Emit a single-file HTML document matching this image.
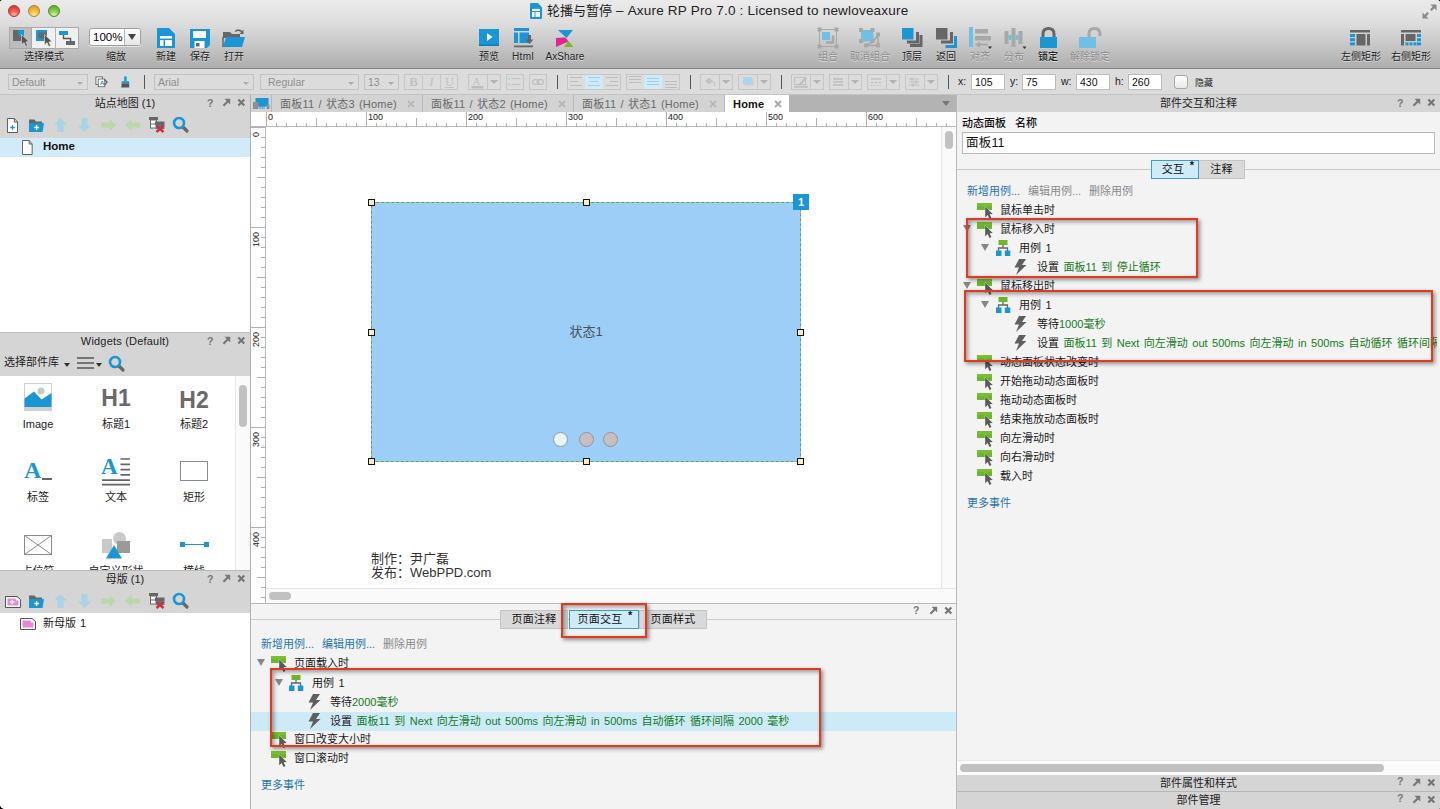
<!DOCTYPE html>
<html lang="zh-CN">
<head>
<meta charset="utf-8">
<title>轮播与暂停 – Axure RP Pro 7.0</title>
<style>
*{box-sizing:border-box;margin:0;padding:0}
html,body{width:1440px;height:809px;overflow:hidden;background:#000}
body{font-family:"Liberation Sans","Noto Sans CJK SC",sans-serif;font-size:11px;color:#1a1a1a;position:relative}
.abs{position:absolute}
#win{position:absolute;left:0;top:0;width:1440px;height:809px;background:#d8d8d8;border-radius:3px 3px 2px 5px;overflow:hidden}
/* ---------- title + toolbar ---------- */
#top{position:absolute;left:0;top:0;width:1440px;height:69px;background:linear-gradient(#ebebeb 0px,#dedede 22px,#c6c6c6 46px,#adadad 68px);border-bottom:1px solid #868686}
#title{position:absolute;left:546px;top:0px;line-height:21px;font-size:13.5px;color:#222;white-space:nowrap;letter-spacing:.2px}
.tl{position:absolute;top:5px;width:12px;height:12px;border-radius:50%}
.tbl{position:absolute;top:50px;font-size:10px;line-height:14px;color:#222;white-space:nowrap;transform:translateX(-50%);text-shadow:0 1px 0 rgba(255,255,255,.5)}
.tbl.dis{color:#8d8d8d}
/* ---------- format bar ---------- */
#fmt{position:absolute;left:0;top:69px;width:1440px;height:26px;background:#dcdcdc;border-bottom:1px solid #c4c4c4}
.dd{position:absolute;top:5px;height:16px;border:1px solid #c2c2c2;background:#dcdcdc;color:#8e8e8e;font-size:10.5px;line-height:14px;padding-left:3px}
.dd:after{content:"";position:absolute;right:4px;top:7px;border:3.5px solid transparent;border-top:3.5px solid #ababab;border-bottom:0}
.fb{position:absolute;top:5px;height:16px;border:1px solid #c6c6c6;background:#dcdcdc}
.fsep{position:absolute;top:6px;width:1px;height:14px;background:#555}
.num{position:absolute;top:5px;height:16px;width:34px;background:#fff;border:1px solid #bdbdbd;font-size:10.5px;line-height:14px;padding-left:3px;color:#111}
.nl{position:absolute;top:6px;font-size:10.5px;color:#222}
/* ---------- panels ---------- */
.ph{position:absolute;height:18px;background:#d5d5d5;font-size:11px;line-height:18px;text-align:center;color:#222;border-top:1px solid #bcbcbc}
.pi{position:absolute;top:0;font-size:10px;font-weight:bold;color:#666}
.white{position:absolute;background:#fff}
.wl{position:absolute;transform:translateX(-50%);font-size:11px;line-height:14px;color:#222;white-space:nowrap}
.tab{letter-spacing:.2px;word-spacing:1px;position:absolute;top:95px;height:17px;background:#d3d3d3;border-right:1px solid #b9b9b9;font-size:11px;line-height:18px;color:#6a6a6a;white-space:nowrap;overflow:hidden}
.tab.act{background:#fff;color:#111;font-weight:bold;height:17px;border-right:0}
.rl{position:absolute;top:112px;font-size:9px;line-height:11px;color:#222}
.rv{position:absolute;left:250px;margin-top:2px;width:12px;font-size:9px;line-height:12px;color:#222;writing-mode:vertical-rl;transform:rotate(180deg);text-align:right;white-space:nowrap}
.ptab{position:absolute;height:19px;letter-spacing:.3px;background:#d9d9d9;border:1px solid #c4c4c4;font-size:11px;line-height:16px;text-align:center;color:#111;white-space:nowrap}
.ptab.sel{background:#cfebf8;border:1px solid #3d9dd1}
.red{position:absolute;border:2px solid #e23a1c;box-shadow:2px 2px 4px rgba(0,0,0,.42),inset 2px 2px 4px rgba(0,0,0,.38)}
.lnk{margin-top:1px;position:absolute;font-size:11px;line-height:14px;color:#2673b3;white-space:nowrap}
.lnk.off{color:#8a8a8a}
.ev{margin-top:1px;word-spacing:1.4px;position:absolute;font-size:11px;line-height:14px;color:#1a1a1a;white-space:nowrap}
.g{color:#137a1c}
</style>
</head>
<body>
<div id="win">

<!-- ================= TITLE + TOOLBAR ================= -->
<div id="top">
  <div class="tl" style="left:8px;background:radial-gradient(circle at 50% 90%,#ffb3aa 0%,#f0645a 40%,#dc4238 75%,#c5342b 100%);border:1px solid #a83a32"></div>
  <div class="tl" style="left:28px;background:radial-gradient(circle at 50% 90%,#ffe9a0 0%,#f5c04a 40%,#e6a52c 75%,#d39520 100%);border:1px solid #a9842c"></div>
  <div class="tl" style="left:48px;background:radial-gradient(circle at 50% 90%,#d6f5a8 0%,#8fd054 40%,#69b536 75%,#55a028 100%);border:1px solid #4f8a2c"></div>

  <!-- doc icon in title -->
  <svg class="abs" style="left:530px;top:3px" width="12" height="16" viewBox="0 0 12 15" preserveAspectRatio="none"><path d="M0 1.2Q0 0 1.2 0H8L12 4V13.8Q12 15 10.8 15H1.2Q0 15 0 13.8Z" fill="#1a96d4"/><rect x="2" y="5.5" width="8" height="2" fill="#fff"/><rect x="2" y="8.5" width="2.5" height="4.5" fill="#fff"/><rect x="5.5" y="8.5" width="4.5" height="4.5" fill="#fff"/></svg>
  <!-- fullscreen -->
  <svg class="abs" style="left:1422px;top:4px" width="15" height="15" viewBox="0 0 15 15"><path d="M8.5 0.5H14.5V6.5L12.3 4.3L9.6 7L8 5.4L10.7 2.7Z" fill="#8a8a8a"/><path d="M6.5 14.5H0.5V8.5L2.7 10.7L5.4 8L7 9.6L4.3 12.3Z" fill="#8a8a8a"/></svg>

  <!-- selection mode group -->
  <div class="abs" style="left:9px;top:27px;width:70px;height:22px;border:1px solid #a9a9a9;background:#f0f0f0"></div>
  <div class="abs" style="left:10px;top:28px;width:22px;height:20px;background:#bcbcbc;border-right:1px solid #a9a9a9"></div>
  <div class="abs" style="left:55px;top:28px;width:1px;height:20px;background:#b4b4b4"></div>
  <svg class="abs" style="left:12px;top:29px" width="19" height="18" viewBox="0 0 19 18"><rect x="1" y="1" width="11" height="11" fill="#666"/><rect x="6.5" y="1" width="5.5" height="6" fill="#1a96d4"/><path d="M9.5 5.5V16L12 13.6L13.8 17.5L15.6 16.7L13.9 12.9L17 12.6Z" fill="#555" stroke="#e8e8e8" stroke-width=".6"/></svg>
  <svg class="abs" style="left:35px;top:29px" width="19" height="18" viewBox="0 0 19 18"><rect x="1" y="1" width="11" height="11" fill="#1a96d4"/><rect x="3.5" y="3.5" width="8.5" height="6" fill="#666"/><path d="M9.5 5.5V16L12 13.6L13.8 17.5L15.6 16.7L13.9 12.9L17 12.6Z" fill="#555" stroke="#e8e8e8" stroke-width=".6"/></svg>
  <svg class="abs" style="left:58px;top:29px" width="19" height="18" viewBox="0 0 19 18"><rect x="1" y="2" width="9" height="4" fill="#1a96d4"/><rect x="8" y="12" width="9" height="4" fill="#666"/><path d="M5.5 6V9.5H12.5V12" fill="none" stroke="#555" stroke-width="1.4"/></svg>
  <div class="tbl" style="left:44px">选择模式</div>

  <!-- zoom combo -->
  <div class="abs" style="left:89px;top:28px;width:52px;height:18px;border:1px solid #9f9f9f;border-radius:3px;background:#fff;box-shadow:0 1px 0 rgba(255,255,255,.5)"></div>
  <div class="abs" style="left:124px;top:29px;width:1px;height:16px;background:#b8b8b8"></div>
  <div class="abs" style="left:125px;top:29px;width:15px;height:16px;background:linear-gradient(#fdfdfd,#e6e6e6);border-radius:0 2px 2px 0"></div>
  <div class="abs" style="left:93px;top:29px;font-size:11.5px;line-height:16px;color:#000">100%</div>
  <div class="abs" style="left:128px;top:34px;border:4px solid transparent;border-top:6px solid #444;border-bottom:0"></div>
  <div class="tbl" style="left:116px">缩放</div>

  <!-- new -->
  <svg class="abs" style="left:157px;top:28px" width="18" height="20" viewBox="0 0 18 20"><path d="M0 0H12L18 6V20H0Z" fill="#1a96d4"/><rect x="3" y="8" width="12" height="2.5" fill="#fff"/><rect x="3" y="12" width="3.5" height="6" fill="#fff"/><rect x="8" y="12" width="7" height="6" fill="#fff"/></svg>
  <div class="tbl" style="left:166px">新建</div>
  <!-- save -->
  <svg class="abs" style="left:190px;top:29px" width="20" height="19" viewBox="0 0 20 19"><path d="M0 0H20V16L17 19H0Z" fill="#1a96d4"/><rect x="3" y="2" width="13" height="7" fill="#fff"/><rect x="4.5" y="12" width="10" height="7" fill="#fff"/><rect x="6" y="14" width="3.5" height="3.5" fill="#666"/></svg>
  <div class="tbl" style="left:200px">保存</div>
  <!-- open -->
  <svg class="abs" style="left:222px;top:28px" width="24" height="20" viewBox="0 0 24 20"><path d="M1 4H8L10 6H18V10H1Z" fill="#666"/><path d="M1 19L4 9H23L20 19Z" fill="#1a96d4"/><path d="M1 9V19" stroke="#666" stroke-width="1.5"/><path d="M13 3.5Q17 0.5 20 4" fill="none" stroke="#666" stroke-width="1.5"/><path d="M21.5 1.5V6H17.5Z" fill="#666"/></svg>
  <div class="tbl" style="left:234px">打开</div>

  <!-- preview -->
  <svg class="abs" style="left:479px;top:29px" width="20" height="17" viewBox="0 0 20 17"><rect width="20" height="17" fill="#1a96d4"/><rect y="15.5" width="20" height="1.5" fill="#147cb0"/><path d="M8 4L13.5 8L8 12Z" fill="#fff"/></svg>
  <div class="tbl" style="left:489px">预览</div>
  <!-- html -->
  <svg class="abs" style="left:514px;top:28px" width="20" height="20" viewBox="0 0 20 20"><rect x="0" y="0" width="15" height="3" fill="#1a96d4"/><rect x="0" y="4.5" width="4" height="10.5" fill="#1a96d4"/><rect x="5.5" y="4.5" width="9.5" height="10.5" fill="#1a96d4"/><rect x="0" y="17.5" width="19" height="1.8" fill="#666"/><path d="M14 7H17V11.5H19.5L15.5 16L11.5 11.5H14Z" fill="#666"/></svg>
  <div class="tbl" style="left:523px;letter-spacing:.4px">Html</div>
  <!-- axshare -->
  <svg class="abs" style="left:555px;top:29px" width="19" height="19" viewBox="0 0 19 19"><path d="M3 1H18L11.500 9Z" fill="#1a96d4"/><path d="M1 9L10.5 8.500L13.5 12.500L1 18Z" fill="#e6258c"/><path d="M13.5 12L18.5 18H9Z" fill="#7ab829"/></svg>
  <div class="tbl" style="left:565px;letter-spacing:.1px">AxShare</div>

  <!-- group (disabled) -->
  <svg class="abs" style="left:817px;top:27px" width="22" height="22" viewBox="0 0 22 22"><rect x="2.5" y="2.5" width="17" height="17" fill="none" stroke="#a8a8a8" stroke-width="1"/><rect x="0.5" y="0.5" width="4" height="4" fill="#a8a8a8"/><rect x="17.5" y="0.5" width="4" height="4" fill="#a8a8a8"/><rect x="0.5" y="17.5" width="4" height="4" fill="#a8a8a8"/><rect x="17.5" y="17.5" width="4" height="4" fill="#a8a8a8"/><path d="M9 15.5H16V8.5" fill="none" stroke="#a8a8a8" stroke-width="2.5"/><rect x="5" y="5" width="8" height="8" fill="#6fc0e4"/></svg>
  <div class="tbl dis" style="left:828px">组合</div>
  <!-- ungroup (disabled) -->
  <svg class="abs" style="left:858px;top:27px" width="24" height="22" viewBox="0 0 24 22"><path d="M8 18.5H20V7.5M15.5 14.5L20 7.5M15.5 14.5L8 18.5" fill="none" stroke="#a8a8a8" stroke-width="1.6"/><rect x="3" y="3" width="12.5" height="11.5" rx="1.5" fill="#6fc0e4"/><g fill="#a8a8a8"><rect x="1" y="1" width="4" height="4"/><rect x="12.5" y="1" width="4" height="4"/><rect x="1" y="12" width="4" height="4"/><rect x="12.5" y="12" width="4" height="4"/><rect x="18" y="5.5" width="4" height="4"/><rect x="6" y="16.500" width="4" height="4"/><rect x="18" y="16.500" width="4" height="4"/></g></svg>
  <div class="tbl dis" style="left:870px">取消组合</div>
  <!-- front -->
  <svg class="abs" style="left:902px;top:28px" width="21" height="21" viewBox="0 0 21 21"><path d="M8 17.5H19V7" fill="none" stroke="#666" stroke-width="3"/><path d="M5 14H15.5V4" fill="none" stroke="#666" stroke-width="3"/><rect x="0" y="0" width="11.5" height="11.5" fill="#1a96d4"/></svg>
  <div class="tbl" style="left:912px">顶层</div>
  <!-- back -->
  <svg class="abs" style="left:936px;top:28px" width="21" height="21" viewBox="0 0 21 21"><path d="M9.5 18.5H19.5V8" fill="none" stroke="#1a96d4" stroke-width="3"/><path d="M5 14H15.5V4" fill="none" stroke="#666" stroke-width="3"/><rect x="0" y="0" width="11.5" height="11.5" fill="#666"/></svg>
  <div class="tbl" style="left:946px">返回</div>
  <!-- align (disabled) -->
  <svg class="abs" style="left:969px;top:27px" width="24" height="22" viewBox="0 0 24 22"><rect x="0" y="0" width="4" height="20" fill="#6fc0e4"/><rect x="6" y="2" width="13" height="4.5" fill="#a8a8a8"/><rect x="6" y="9" width="16" height="4.5" fill="#a8a8a8"/><path d="M6 17.5L11 14.5V16.5H19V18.5H11V20.5Z" fill="#a8a8a8"/><path d="M19 19.5H23L21 22Z" fill="#333"/></svg>
  <div class="tbl dis" style="left:980px">对齐</div>
  <!-- distribute (disabled) -->
  <svg class="abs" style="left:1003px;top:27px" width="24" height="22" viewBox="0 0 24 22"><rect x="1.5" y="4" width="4" height="13" fill="#a8a8a8"/><rect x="15.5" y="4" width="4" height="13" fill="#a8a8a8"/><rect x="8.500" y="1" width="4" height="19" fill="#a8a8a8"/><rect x="5.5" y="8" width="3" height="5" fill="#6fc0e4"/><rect x="12.5" y="8" width="3" height="5" fill="#6fc0e4"/><path d="M19.5 19.5H23.5L21.5 22Z" fill="#333"/></svg>
  <div class="tbl dis" style="left:1014px">分布</div>
  <!-- lock -->
  <svg class="abs" style="left:1040px;top:27px" width="17" height="21" viewBox="0 0 17 21"><path d="M3 10V7Q3 1.5 8.5 1.5Q14 1.5 14 7V10" fill="none" stroke="#666" stroke-width="3"/><rect x="0" y="10" width="17" height="11" fill="#1a96d4"/></svg>
  <div class="tbl" style="left:1048px;font-weight:500">锁定</div>
  <!-- unlock (disabled) -->
  <svg class="abs" style="left:1079px;top:27px" width="23" height="21" viewBox="0 0 23 21"><path d="M10 10V7Q10 1.5 15.5 1.5Q21 1.5 21 7V9" fill="none" stroke="#a8a8a8" stroke-width="3"/><rect x="0" y="10" width="17" height="11" fill="#6fc0e4"/></svg>
  <div class="tbl dis" style="left:1090px">解除锁定</div>

  <!-- left rect -->
  <svg class="abs" style="left:1350px;top:30px" width="20" height="16" viewBox="0 0 20 16"><rect x="0" y="0" width="20" height="2.5" fill="#666"/><rect x="0" y="4" width="5" height="3" fill="#1a96d4"/><rect x="0" y="8.2" width="5" height="3" fill="#1a96d4"/><rect x="0" y="12.4" width="5" height="3" fill="#1a96d4"/><rect x="6.5" y="4" width="9" height="11.5" fill="#666"/><rect x="17" y="4" width="3" height="11.5" fill="#666"/></svg>
  <div class="tbl" style="left:1361px">左侧矩形</div>
  <!-- right rect -->
  <svg class="abs" style="left:1401px;top:30px" width="20" height="16" viewBox="0 0 20 16"><rect x="0" y="0" width="20" height="2.5" fill="#666"/><rect x="0" y="4" width="3" height="11.5" fill="#666"/><rect x="4.5" y="4" width="10" height="7" fill="#666"/><rect x="4.5" y="12.4" width="3" height="3" fill="#1a96d4"/><rect x="8.5" y="12.4" width="3" height="3" fill="#1a96d4"/><rect x="12.5" y="12.4" width="3" height="3" fill="#1a96d4"/><rect x="16" y="4" width="4" height="3" fill="#1a96d4"/><rect x="16" y="8.2" width="4" height="3" fill="#1a96d4"/><rect x="16" y="12.4" width="4" height="3" fill="#1a96d4"/></svg>
  <div class="tbl" style="left:1411px">右侧矩形</div>
  <div id="title"><span style="font-size:13px;letter-spacing:0;margin-left:1px">轮播与暂停</span> – Axure RP Pro 7.0 : Licensed to newloveaxure</div>
</div>

<!-- ================= FORMAT BAR ================= -->
<div id="fmt">
  <div class="dd" style="left:8px;width:80px">Default</div>
  <!-- style painter icons -->
  <svg class="abs" style="left:95px;top:7px" width="13" height="12" viewBox="0 0 14 14" preserveAspectRatio="none"><rect x="1" y="1" width="7" height="9" fill="#fff" stroke="#666" stroke-width="1"/><rect x="3.5" y="3.5" width="7" height="9" fill="#fff" stroke="#666" stroke-width="1"/><text x="5" y="10.5" font-size="7" font-weight="bold" fill="#1a96d4" font-family="Liberation Sans, sans-serif">A</text><path d="M10 4L13 7L10.5 10.5" fill="none" stroke="#555" stroke-width="1.3"/></svg>
  <svg class="abs" style="left:120px;top:7px" width="10" height="12" viewBox="0 0 12 15" preserveAspectRatio="none"><rect x="5" y="0.5" width="3" height="6" fill="#1a96d4"/><rect x="2" y="6.5" width="9" height="3" fill="#1a96d4"/><path d="M2 9.5H11V14.5H1.5Z" fill="#555"/></svg>
  <div class="fsep" style="left:144px"></div>
  <div class="dd" style="left:154px;width:100px">Arial</div>
  <div class="dd" style="left:260px;width:99px;padding-left:7px">Regular</div>
  <div class="dd" style="left:364px;width:35px">13</div>
  <!-- B I U -->
  <div class="fb" style="left:404px;width:54px"></div>
  <div class="abs" style="left:422px;top:6px;width:1px;height:14px;background:#c6c6c6"></div>
  <div class="abs" style="left:440px;top:6px;width:1px;height:14px;background:#c6c6c6"></div>
  <div class="abs" style="left:404px;top:5px;width:19px;height:16px;line-height:16px;text-align:center;font-family:'Liberation Serif',serif;font-weight:bold;font-size:13px;color:#c2c2c2">B</div>
  <div class="abs" style="left:422px;top:5px;width:19px;height:16px;line-height:16px;text-align:center;font-family:'Liberation Serif',serif;font-style:italic;font-size:13px;color:#c2c2c2">I</div>
  <div class="abs" style="left:440px;top:5px;width:19px;height:16px;line-height:16px;text-align:center;font-family:'Liberation Serif',serif;font-size:12px;color:#c2c2c2;text-decoration:underline">U</div>
  <!-- font color -->
  <div class="fb" style="left:468px;width:33px"></div><div class="abs" style="left:487px;top:6px;width:1px;height:14px;background:#c6c6c6"></div><div class="abs" style="left:490px;top:11px;border:4px solid transparent;border-top:4px solid #b3b3b3;border-bottom:0"></div>
  <svg class="abs" style="left:471px;top:7px" width="13" height="13" viewBox="0 0 13 13"><text x="1.5" y="9" font-size="11" fill="#c2c2c2" font-family="Liberation Serif, serif">A</text><rect x="0.5" y="10" width="12" height="2.5" fill="#bdbdbd"/></svg>
  <!-- bullets, link -->
  <div class="fb" style="left:506px;width:18px"></div>
  <svg class="abs" style="left:508px;top:8px" width="14" height="10" viewBox="0 0 14 10"><rect x="0" y="0.5" width="2" height="2" fill="#a9d6ea"/><rect x="0" y="6.5" width="2" height="2" fill="#a9d6ea"/><rect x="3.5" y="1" width="9" height="1" fill="#c0c0c0"/><rect x="3.5" y="7" width="9" height="1" fill="#c0c0c0"/></svg>
  <div class="fb" style="left:529px;width:18px"></div>
  <svg class="abs" style="left:532px;top:10px" width="12" height="6" viewBox="0 0 12 6"><rect x="0.7" y="0.7" width="6" height="4.6" rx="2" fill="none" stroke="#c0c0c0" stroke-width="1.3"/><rect x="5.3" y="0.7" width="6" height="4.6" rx="2" fill="none" stroke="#c0c0c0" stroke-width="1.3"/></svg>
  <div class="fsep" style="left:557px"></div>
  <!-- h align -->
  <div class="fb" style="left:567px;width:54px"></div>
  <div class="abs" style="left:585px;top:6px;width:18px;height:14px;background:#cfebf8"></div>
  <svg class="abs" style="left:570px;top:8px" width="13" height="9" viewBox="0 0 13 9"><path d="M0 .5H12M0 4.5H8M0 8.5H12" stroke="#bdbdbd" stroke-width="1"/></svg>
  <svg class="abs" style="left:588px;top:8px" width="13" height="9" viewBox="0 0 13 9"><path d="M0 .5H12M2 4.5H10M0 8.5H12" stroke="#9fd0e6" stroke-width="1"/></svg>
  <svg class="abs" style="left:606px;top:8px" width="13" height="9" viewBox="0 0 13 9"><path d="M0 .5H12M4 4.5H12M0 8.5H12" stroke="#bdbdbd" stroke-width="1"/></svg>
  <!-- v align -->
  <div class="fb" style="left:626px;width:54px"></div>
  <div class="abs" style="left:644px;top:6px;width:18px;height:14px;background:#cfebf8"></div>
  <svg class="abs" style="left:629px;top:7px" width="13" height="12" viewBox="0 0 13 12"><path d="M0 .5H12M0 3.5H12M0 6.5H12" stroke="#bdbdbd" stroke-width="1"/></svg>
  <svg class="abs" style="left:647px;top:7px" width="13" height="12" viewBox="0 0 13 12"><path d="M0 2.5H12M0 5.5H12M0 8.5H12" stroke="#9fd0e6" stroke-width="1"/></svg>
  <svg class="abs" style="left:665px;top:7px" width="13" height="12" viewBox="0 0 13 12"><path d="M0 5.5H12M0 8.5H12M0 11.5H12" stroke="#bdbdbd" stroke-width="1"/></svg>
  <div class="fsep" style="left:690px"></div>
  <div class="fb" style="left:700px;width:33px"></div><div class="abs" style="left:719px;top:6px;width:1px;height:14px;background:#c6c6c6"></div><div class="abs" style="left:722px;top:11px;border:4px solid transparent;border-top:4px solid #b3b3b3;border-bottom:0"></div>
  <svg class="abs" style="left:704px;top:8px" width="12" height="10" viewBox="0 0 12 10"><path d="M1 4L5 .5L9 4L5 7.5Z" fill="#c4c4c4"/><path d="M8.5 4.5Q11 5 10.5 9" fill="none" stroke="#c4c4c4" stroke-width="1.2"/></svg>
  <div class="fb" style="left:738px;width:33px"></div><div class="abs" style="left:757px;top:6px;width:1px;height:14px;background:#c6c6c6"></div><div class="abs" style="left:760px;top:11px;border:4px solid transparent;border-top:4px solid #b3b3b3;border-bottom:0"></div>
  <svg class="abs" style="left:743px;top:8px" width="11" height="9" viewBox="0 0 11 9"><rect x="1.5" y="1.5" width="9" height="7" fill="#cdcdcd"/><rect x="0" y="0" width="9" height="7" fill="#a9d6ea"/></svg>
  <div class="fsep" style="left:781px"></div>
  <div class="fb" style="left:791px;width:33px"></div><div class="abs" style="left:810px;top:6px;width:1px;height:14px;background:#c6c6c6"></div><div class="abs" style="left:813px;top:11px;border:4px solid transparent;border-top:4px solid #b3b3b3;border-bottom:0"></div>
  <svg class="abs" style="left:794px;top:7px" width="14" height="12" viewBox="0 0 14 12"><rect x="0.5" y="1.5" width="11" height="7" fill="none" stroke="#c2c2c2"/><path d="M5 8L11.5 .8L13 2L7 9Z" fill="#bdbdbd"/><rect x="0" y="9.5" width="14" height="2.5" fill="#c4c4c4"/></svg>
  <div class="fb" style="left:829px;width:33px"></div><div class="abs" style="left:848px;top:6px;width:1px;height:14px;background:#c6c6c6"></div><div class="abs" style="left:851px;top:11px;border:4px solid transparent;border-top:4px solid #b3b3b3;border-bottom:0"></div>
  <svg class="abs" style="left:833px;top:9px" width="11" height="8" viewBox="0 0 11 8"><path d="M0 1H10M0 4H10M0 7H10" stroke="#bdbdbd" stroke-width="1.3"/></svg>
  <div class="fb" style="left:867px;width:33px"></div><div class="abs" style="left:886px;top:6px;width:1px;height:14px;background:#c6c6c6"></div><div class="abs" style="left:889px;top:11px;border:4px solid transparent;border-top:4px solid #b3b3b3;border-bottom:0"></div>
  <svg class="abs" style="left:871px;top:9px" width="11" height="8" viewBox="0 0 11 8"><path d="M0 1H10" stroke="#bdbdbd" stroke-width="1.2"/><path d="M0 4.5H10" stroke="#bdbdbd" stroke-width="1.2" stroke-dasharray="2.5 1.2"/><path d="M0 7.5H10" stroke="#bdbdbd" stroke-width="1.2" stroke-dasharray="1.2 1.2"/></svg>
  <div class="fb" style="left:905px;width:33px"></div><div class="abs" style="left:924px;top:6px;width:1px;height:14px;background:#c6c6c6"></div><div class="abs" style="left:927px;top:11px;border:4px solid transparent;border-top:4px solid #b3b3b3;border-bottom:0"></div>
  <svg class="abs" style="left:909px;top:8px" width="11" height="10" viewBox="0 0 11 10"><path d="M0 2H10M0 5H10M0 8H10" stroke="#bdbdbd" stroke-width="1"/><path d="M3 0.5V3.5M7 3.5V6.5M4 6.5V9.5" stroke="#bdbdbd" stroke-width="1.4"/></svg>
  <div class="fsep" style="left:948px"></div>
  <div class="nl" style="left:958px">x:</div><div class="num" style="left:971px">105</div>
  <div class="nl" style="left:1010px">y:</div><div class="num" style="left:1022px">75</div>
  <div class="nl" style="left:1061px">w:</div><div class="num" style="left:1076px">430</div>
  <div class="nl" style="left:1115px">h:</div><div class="num" style="left:1128px">260</div>
  <div class="abs" style="left:1174px;top:6px;width:14px;height:14px;border:1px solid #a8a8a8;border-radius:3px;background:linear-gradient(#fff,#e9e9e9)"></div>
  <div class="abs" style="left:1195px;top:9px;font-size:9px;line-height:10px;color:#222">隐藏</div>
</div>

<!-- ================= LEFT COLUMN ================= -->
<div class="abs" style="left:0;top:95px;width:250px;height:714px;background:#d5d5d5"></div>
<div class="abs" style="left:250px;top:95px;width:1px;height:714px;background:#b0b0b0"></div>
<!-- sitemap -->
<div class="ph" style="left:0;top:95px;width:250px;border-top:0;height:17px;line-height:16px">站点地图 (1)</div>

  <div class="abs" style="left:207px;top:96px;font-size:10.5px;line-height:14px;font-weight:bold;color:#777">?</div>
  <svg class="abs" style="left:222px;top:98px" width="9" height="9" viewBox="0 0 9 9"><path d="M2.5 .8H8.2V6.5L6.2 4.5L2.2 8.5L.7 7L4.7 3Z" fill="#777"/></svg>
  <svg class="abs" style="left:237px;top:98px" width="9" height="9" viewBox="0 0 9 9"><path d="M1.3 1.6L7.300 7.600M7.300 1.600L1.300 7.600" stroke="#747474" stroke-width="2.1"/></svg>
  <svg class="abs" style="left:7px;top:118px" width="11" height="15" viewBox="0 0 12 15" preserveAspectRatio="none"><path d="M.5 .5H8L11.5 4V14.5H.5Z" fill="#fff" stroke="#555" stroke-width="1"/><path d="M8 .5V4H11.5" fill="none" stroke="#555" stroke-width="1"/><path d="M3.5 9.5H8.5M6 7V12" stroke="#1a96d4" stroke-width="1.3"/></svg>
  <svg class="abs" style="left:28px;top:118px" width="17" height="14" viewBox="0 0 17 14"><path d="M1 1.5H6.5L8 3.5H14V6H1Z" fill="#666"/><path d="M1 5H16L14.5 14H1Z" fill="#1a96d4"/><path d="M6.2 9.5H11M8.6 7.1V11.9" stroke="#fff" stroke-width="1.4"/></svg>
  <svg class="abs" style="left:54px;top:118px" width="13" height="14" viewBox="0 0 13 14"><path d="M6.5 0L13 6.5H9.5V14H3.5V6.5H0Z" fill="#a9d3e6"/></svg>
  <svg class="abs" style="left:78px;top:118px" width="13" height="14" viewBox="0 0 13 14"><path d="M6.5 14L13 7.5H9.5V0H3.5V7.5H0Z" fill="#a9d3e6"/></svg>
  <svg class="abs" style="left:101px;top:119px" width="15" height="12" viewBox="0 0 15 12"><path d="M15 6L8.5 0V3.5H0V8.5H8.5V12Z" fill="#bcd7a8"/></svg>
  <svg class="abs" style="left:125px;top:119px" width="15" height="12" viewBox="0 0 15 12"><path d="M0 6L6.5 0V3.5H15V8.5H6.5V12Z" fill="#bcd7a8"/></svg>
  <svg class="abs" style="left:148px;top:116px" width="18" height="17" viewBox="0 0 18 17"><rect x="1" y="1" width="9" height="3" fill="#666"/><rect x="2.5" y="4" width="6" height="8" fill="#fff" stroke="#666" stroke-width="1"/><path d="M2.5 8H8.5" stroke="#666" stroke-width="1"/><rect x="7" y="5.5" width="9.5" height="3.5" fill="#666"/><rect x="7.5" y="9" width="9" height="4" fill="#1a96d4"/><path d="M8.500 9.500L15.5 16M15.5 9.500L8.500 16" stroke="#e02a2a" stroke-width="2.4"/></svg>
  <svg class="abs" style="left:172px;top:116px" width="18" height="18" viewBox="0 0 18 18"><path d="M11 11L15 15" stroke="#666" stroke-width="3.200" stroke-linecap="round"/><circle cx="7" cy="7" r="5" fill="none" stroke="#1a96d4" stroke-width="2.600"/></svg>
<div class="white" style="left:0;top:138px;width:250px;height:195px"></div>
<div class="abs" style="left:0;top:138px;width:250px;height:19px;background:#d1ecf8"></div>
<svg class="abs" style="left:22px;top:140px" width="11" height="15" viewBox="0 0 13 15" preserveAspectRatio="none"><path d="M.5 .5H8.5L12 4V14.5H.5Z" fill="#fff" stroke="#555" stroke-width="1"/><path d="M8.5 .5V4H12" fill="none" stroke="#555" stroke-width="1"/></svg>
<div class="abs" style="left:43px;top:139px;font-size:11.5px;line-height:15px;font-weight:bold;color:#111">Home</div>

<!-- widgets -->
<div class="ph" style="left:0;top:332px;width:250px;line-height:16px;letter-spacing:.2px">Widgets (Default)</div>

  <div class="abs" style="left:207px;top:334px;font-size:10.5px;line-height:14px;font-weight:bold;color:#777">?</div>
  <svg class="abs" style="left:222px;top:336px" width="9" height="9" viewBox="0 0 9 9"><path d="M2.5 .8H8.2V6.5L6.2 4.5L2.2 8.5L.7 7L4.7 3Z" fill="#777"/></svg>
  <svg class="abs" style="left:237px;top:336px" width="9" height="9" viewBox="0 0 9 9"><path d="M1.3 1.6L7.300 7.600M7.300 1.600L1.300 7.600" stroke="#747474" stroke-width="2.1"/></svg>
<div class="abs" style="left:4px;top:355px;font-size:11px;line-height:14px;color:#222">选择部件库</div>
<div class="abs" style="left:64px;top:363px;border:3px solid transparent;border-top:4px solid #333;border-bottom:0"></div>
<svg class="abs" style="left:77px;top:356px" width="18" height="14" viewBox="0 0 18 14"><path d="M0 2H17M0 7H17M0 12H17" stroke="#555" stroke-width="1.6"/></svg>
<div class="abs" style="left:96px;top:363px;border:3px solid transparent;border-top:4px solid #333;border-bottom:0"></div>
<svg class="abs" style="left:108px;top:355px" width="18" height="18" viewBox="0 0 18 18"><path d="M11 11L15 15" stroke="#666" stroke-width="3.200" stroke-linecap="round"/><circle cx="7" cy="7" r="5" fill="none" stroke="#1a96d4" stroke-width="2.600"/></svg>
<div class="white" style="left:0;top:376px;width:250px;height:194px;overflow:hidden">
  <div class="abs" style="left:235px;top:0;width:15px;height:194px;background:#fafafa;border-left:1px solid #e8e8e8"></div>
  <div class="abs" style="left:239px;top:9px;width:8px;height:42px;border-radius:4px;background:#c1c1c1"></div>
  <!-- row 1 -->
  <svg class="abs" style="left:24px;top:7px" width="28" height="28" viewBox="0 0 28 28"><rect x=".5" y=".5" width="27" height="27" fill="#fff" stroke="#d0d0d0"/><circle cx="17" cy="8" r="3.5" fill="#c8c8c8"/><path d="M.5 15.500L10 8.500L17.5 16.500L27.5 10V24H.5Z" fill="#1a96d4"/><rect x=".5" y="24" width="27" height="3.5" fill="#d0d0d0"/></svg>
  <div class="wl" style="left:38px;top:41px">Image</div>
  <div class="abs" style="left:96px;top:9px;width:40px;text-align:center;font-size:23px;line-height:26px;font-weight:bold;color:#6a6a6a">H1</div>
  <div class="wl" style="left:116px;top:41px">标题1</div>
  <div class="abs" style="left:174px;top:10.5px;width:40px;text-align:center;font-size:23px;line-height:26px;font-weight:bold;color:#6a6a6a">H2</div>
  <div class="wl" style="left:194px;top:41px">标题2</div>
  <!-- row 2 -->
  <div class="abs" style="left:24px;top:80px;font-family:'Liberation Serif',serif;font-weight:bold;font-size:24px;line-height:28px;color:#1a96d4">A</div>
  <div class="abs" style="left:42px;top:102px;width:10px;height:2px;background:#666"></div>
  <div class="wl" style="left:38px;top:114px">标签</div>
  <div class="abs" style="left:101px;top:78px;font-family:'Liberation Serif',serif;font-weight:bold;font-size:23px;line-height:26px;color:#1a96d4">A</div>
  <svg class="abs" style="left:101px;top:81px" width="30" height="30" viewBox="0 0 30 30"><path d="M19.5 2H29M19.5 7.3H29M19.5 12.6H29M19.5 17.9H29M1 23.2H29M1 27.6H29" stroke="#666" stroke-width="1.7"/></svg>
  <div class="wl" style="left:116px;top:114px">文本</div>
  <div class="abs" style="left:180px;top:85px;width:28px;height:20px;background:#fff;border:1px solid #8a8a8a"></div>
  <div class="wl" style="left:194px;top:114px">矩形</div>
  <!-- row 3 -->
  <svg class="abs" style="left:24px;top:159px" width="28" height="20" viewBox="0 0 28 20"><rect x=".5" y=".5" width="27" height="19" fill="#fff" stroke="#8a8a8a"/><path d="M.5 .5L27.5 19.5M27.5 .5L.5 19.5" stroke="#8a8a8a" stroke-width="1"/></svg>
  <div class="wl" style="left:38px;top:188px">占位符</div>
  <svg class="abs" style="left:101px;top:155px" width="30" height="30" viewBox="0 0 30 30"><rect x="1" y="8" width="10" height="14" fill="#c9c9c9"/><circle cx="18.5" cy="7.500" r="6.5" fill="#c9c9c9"/><rect x="16" y="10" width="13" height="12" fill="#9a9a9a"/><path d="M13 14L21 27.500H5Z" fill="#1a96d4"/></svg>
  <div class="wl" style="left:116px;top:188px">自定义形状</div>
  <svg class="abs" style="left:180px;top:165px" width="29" height="7" viewBox="0 0 29 7"><path d="M3 3.5H26" stroke="#1a96d4" stroke-width="1"/><rect x="0" y="1" width="5" height="5" fill="#1a96d4"/><rect x="24" y="1" width="5" height="5" fill="#1a96d4"/></svg>
  <div class="wl" style="left:194px;top:188px">横线</div>
</div>

<!-- masters -->
<div class="ph" style="left:0;top:570px;width:250px;line-height:16px;height:19px">母版 (1)</div>

  <div class="abs" style="left:207px;top:572px;font-size:10.5px;line-height:14px;font-weight:bold;color:#777">?</div>
  <svg class="abs" style="left:222px;top:574px" width="9" height="9" viewBox="0 0 9 9"><path d="M2.5 .8H8.2V6.5L6.2 4.5L2.2 8.5L.7 7L4.7 3Z" fill="#777"/></svg>
  <svg class="abs" style="left:237px;top:574px" width="9" height="9" viewBox="0 0 9 9"><path d="M1.3 1.6L7.300 7.600M7.300 1.600L1.300 7.600" stroke="#747474" stroke-width="2.1"/></svg>
  <svg class="abs" style="left:5px;top:596px" width="16" height="12" viewBox="0 0 16 12"><path d="M.5 .5H12L15.5 3.5V11.5H.5Z" fill="#fff" stroke="#555" stroke-width="1"/><path d="M2.5 2.5H10.5L11 4.5H13.5V9.5H2.5Z" fill="#e987cf"/><path d="M5 6H9.5M7.2 3.8V8.2" stroke="#fff" stroke-width="1.3"/></svg>
  <svg class="abs" style="left:28px;top:594px" width="17" height="14" viewBox="0 0 17 14"><path d="M1 1.5H6.5L8 3.5H14V6H1Z" fill="#666"/><path d="M1 5H16L14.5 14H1Z" fill="#1a96d4"/><path d="M6.2 9.5H11M8.6 7.1V11.9" stroke="#fff" stroke-width="1.4"/></svg>
  <svg class="abs" style="left:54px;top:594px" width="13" height="14" viewBox="0 0 13 14"><path d="M6.5 0L13 6.5H9.5V14H3.5V6.5H0Z" fill="#a9d3e6"/></svg>
  <svg class="abs" style="left:78px;top:594px" width="13" height="14" viewBox="0 0 13 14"><path d="M6.5 14L13 7.5H9.5V0H3.5V7.5H0Z" fill="#a9d3e6"/></svg>
  <svg class="abs" style="left:101px;top:595px" width="15" height="12" viewBox="0 0 15 12"><path d="M15 6L8.5 0V3.5H0V8.5H8.5V12Z" fill="#bcd7a8"/></svg>
  <svg class="abs" style="left:125px;top:595px" width="15" height="12" viewBox="0 0 15 12"><path d="M0 6L6.5 0V3.5H15V8.5H6.5V12Z" fill="#bcd7a8"/></svg>
  <svg class="abs" style="left:148px;top:592px" width="18" height="17" viewBox="0 0 18 17"><rect x="1" y="1" width="9" height="3" fill="#666"/><rect x="2.5" y="4" width="6" height="8" fill="#fff" stroke="#666" stroke-width="1"/><path d="M2.5 8H8.5" stroke="#666" stroke-width="1"/><rect x="7" y="5.5" width="9.5" height="3.5" fill="#666"/><rect x="7.5" y="9" width="9" height="4" fill="#1a96d4"/><path d="M8.500 9.500L15.5 16M15.5 9.500L8.500 16" stroke="#e02a2a" stroke-width="2.4"/></svg>
  <svg class="abs" style="left:172px;top:592px" width="18" height="18" viewBox="0 0 18 18"><path d="M11 11L15 15" stroke="#666" stroke-width="3.200" stroke-linecap="round"/><circle cx="7" cy="7" r="5" fill="none" stroke="#1a96d4" stroke-width="2.600"/></svg>
<div class="white" style="left:0;top:613px;width:250px;height:196px"></div>
<svg class="abs" style="left:20px;top:618px" width="16" height="12" viewBox="0 0 16 12"><path d="M.5 .5H12L15.5 3.5V11.5H.5Z" fill="#fff" stroke="#555" stroke-width="1"/><path d="M2.5 2.5H10.5L11 4.5H13.5V9.5H2.5Z" fill="#e987cf"/></svg>
<div class="abs" style="left:43px;top:616px;font-size:11px;line-height:15px;color:#222;word-spacing:1px">新母版 1</div>

<!-- ================= CENTER ================= -->
<div class="abs" style="left:251px;top:95px;width:705px;height:17px;background:#b3b3b3"></div>
<div class="abs" style="left:251px;top:95px;width:21px;height:17px;background:#d3d3d3;border-right:1px solid #b9b9b9"></div>
<svg class="abs" style="left:253px;top:97px" width="17" height="13" viewBox="0 0 17 13"><rect x="2.5" y="1" width="13" height="8.5" fill="#1a96d4"/><rect x="6" y="9.5" width="6" height="2.5" fill="#1a96d4"/><rect x="0" y="5" width="5.5" height="7" fill="#8f8f8f"/><rect x="13.5" y="7.5" width="3" height="4.5" fill="#8f8f8f"/><rect x="5.5" y="10.5" width="8" height="1" fill="#dcdcdc"/></svg>
<div class="tab" style="left:272px;width:151px"><span style="margin-left:8px">面板11 / 状态3 (Home)</span><svg class="abs" style="right:7px;top:5px" width="8" height="8" viewBox="0 0 8 8"><path d="M1 1L7 7M7 1L1 7" stroke="#b9b9b9" stroke-width="1.8"/></svg></div><div class="tab" style="left:423px;width:151px"><span style="margin-left:8px">面板11 / 状态2 (Home)</span><svg class="abs" style="right:7px;top:5px" width="8" height="8" viewBox="0 0 8 8"><path d="M1 1L7 7M7 1L1 7" stroke="#b9b9b9" stroke-width="1.8"/></svg></div><div class="tab" style="left:574px;width:151px"><span style="margin-left:8px">面板11 / 状态1 (Home)</span><svg class="abs" style="right:7px;top:5px" width="8" height="8" viewBox="0 0 8 8"><path d="M1 1L7 7M7 1L1 7" stroke="#b9b9b9" stroke-width="1.8"/></svg></div>
<div class="tab act" style="left:725px;width:64px"><span style="margin-left:8px">Home</span><svg class="abs" style="right:7px;top:5px" width="8" height="8" viewBox="0 0 8 8"><path d="M1 1L7 7M7 1L1 7" stroke="#a8a8a8" stroke-width="1.8"/></svg></div>
<div class="abs" style="left:942px;top:101px;border:4.5px solid transparent;border-top:5px solid #777;border-bottom:0"></div>

<!-- canvas area -->
<div class="white" style="left:251px;top:112px;width:705px;height:491px"></div>
<!-- top ruler -->
<div class="abs" style="left:266px;top:123px;width:690px;height:3px;background:repeating-linear-gradient(90deg,#b0b0b0 0,#b0b0b0 1px,transparent 1px,transparent 10px)"></div>
<div class="abs" style="left:266px;top:118px;width:690px;height:8px;background:repeating-linear-gradient(90deg,#b0b0b0 0,#b0b0b0 1px,transparent 1px,transparent 50px)"></div>
<div class="abs" style="left:266px;top:112px;width:690px;height:14px;background:repeating-linear-gradient(90deg,#b0b0b0 0,#b0b0b0 1px,transparent 1px,transparent 100px)"></div>
<div class="abs" style="left:251px;top:126px;width:705px;height:1px;background:#b8b8b8"></div>
<div class="rl" style="left:268px">0</div><div class="rl" style="left:368px">100</div><div class="rl" style="left:468px">200</div><div class="rl" style="left:568px">300</div><div class="rl" style="left:668px">400</div><div class="rl" style="left:768px">500</div><div class="rl" style="left:868px">600</div>
<!-- left ruler -->
<div class="abs" style="left:261px;top:127px;width:4px;height:476px;background:repeating-linear-gradient(180deg,#b0b0b0 0,#b0b0b0 1px,transparent 1px,transparent 10px)"></div>
<div class="abs" style="left:257px;top:127px;width:8px;height:476px;background:repeating-linear-gradient(180deg,#b0b0b0 0,#b0b0b0 1px,transparent 1px,transparent 50px)"></div>
<div class="abs" style="left:251px;top:127px;width:14px;height:476px;background:repeating-linear-gradient(180deg,#b0b0b0 0,#b0b0b0 1px,transparent 1px,transparent 100px)"></div>
<div class="abs" style="left:265px;top:126px;width:1px;height:477px;background:#b8b8b8"></div>
<div class="rv" style="top:130px">0</div><div class="rv" style="top:230px">100</div><div class="rv" style="top:330px">200</div><div class="rv" style="top:430px">300</div><div class="rv" style="top:530px">400</div>
<!-- scrollbars -->
<div class="abs" style="left:941px;top:127px;width:15px;height:462px;background:#fafafa;border-left:1px solid #e6e6e6"></div>
<div class="abs" style="left:945px;top:131px;width:8px;height:18px;border-radius:4px;background:#c1c1c1"></div>
<div class="abs" style="left:266px;top:588px;width:690px;height:15px;background:#fafafa;border-top:1px solid #e6e6e6"></div>
<div class="abs" style="left:269px;top:592px;width:22px;height:8px;border-radius:4px;background:#c1c1c1"></div>

<!-- selected dynamic panel -->
<div class="abs" style="left:371px;top:202px;width:430px;height:260px;background:#9dcef7"></div>
<svg class="abs" style="left:367px;top:198px" width="438" height="268" viewBox="0 0 438 268"><rect x="4.5" y="4.5" width="429" height="259" fill="none" stroke="#6fe07c" stroke-width="1"/><rect x="4.5" y="4.5" width="429" height="259" fill="none" stroke="#6f8f86" stroke-width="1" stroke-dasharray="2.5 2.5"/>
<g fill="#f4efc0" stroke="#111" stroke-width="1"><rect x="1.5" y="1.5" width="6" height="6"/><rect x="216.500" y="1.5" width="6" height="6"/><rect x="430.5" y="260.5" width="6" height="6"/><rect x="1.5" y="131.500" width="6" height="6"/><rect x="430.5" y="131.500" width="6" height="6"/><rect x="1.5" y="260.5" width="6" height="6"/><rect x="216.500" y="260.5" width="6" height="6"/></g></svg>
<div class="abs" style="left:793px;top:194px;width:16px;height:16px;background:#1a96d4;color:#fff;font-size:11px;font-weight:bold;line-height:16px;text-align:center">1</div>
<div class="abs" style="left:536px;top:323px;width:100px;text-align:center;font-size:13px;line-height:18px;color:#48535d">状态1</div>
<div class="abs" style="left:553px;top:432px;width:15px;height:15px;border-radius:50%;background:#e9f3fa;border:1px solid #8f9aa3"></div>
<div class="abs" style="left:579px;top:432px;width:15px;height:15px;border-radius:50%;background:#c8bfc4;border:1px solid #9b9097"></div>
<div class="abs" style="left:603px;top:432px;width:15px;height:15px;border-radius:50%;background:#c8bfc4;border:1px solid #9b9097"></div>
<div class="abs" style="left:371px;top:551px;font-size:13px;line-height:15px;color:#333;white-space:nowrap">制作：尹广磊</div>
<div class="abs" style="left:371px;top:565px;font-size:13px;line-height:15px;color:#333;white-space:nowrap">发布：WebPPD.com</div>

<!-- bottom page panel -->
<div class="abs" style="left:251px;top:603px;width:705px;height:206px;background:#f3f3f3;border-top:1px solid #b9b9b9"></div>

  <div class="abs" style="left:913px;top:603px;font-size:10.5px;line-height:14px;font-weight:bold;color:#777">?</div>
  <svg class="abs" style="left:929px;top:606px" width="9" height="9" viewBox="0 0 9 9"><path d="M2.5 .8H8.2V6.5L6.2 4.5L2.2 8.5L.7 7L4.7 3Z" fill="#777"/></svg>
  <svg class="abs" style="left:944px;top:606px" width="9" height="9" viewBox="0 0 9 9"><path d="M1.3 1.6L7.300 7.600M7.300 1.600L1.300 7.600" stroke="#747474" stroke-width="2.1"/></svg>
<div class="abs" style="left:251px;top:712px;width:705px;height:19px;background:#cdeaf7"></div>
<div class="abs" style="left:251px;top:619px;width:705px;height:1px;background:#cbcbcb"></div>
<div class="ptab" style="left:500px;top:610px;width:68px">页面注释</div>
<div class="ptab sel" style="left:569px;top:610px;width:70px">页面交互 <span style="position:relative;top:-4px;left:2px;font-size:11px;font-weight:bold">*</span></div>
<div class="ptab" style="left:639px;top:610px;width:68px">页面样式</div>
<div class="red" style="left:561px;top:603px;width:86px;height:35px"></div>
<div class="lnk" style="left:261px;top:636px">新增用例...</div><div class="lnk" style="left:322px;top:636px">编辑用例...</div><div class="lnk off" style="left:383px;top:636px">删除用例</div>
<div class="abs" style="left:257px;top:659px;border:4.5px solid transparent;border-top:7px solid #868686;border-bottom:0"></div><svg class="abs" style="left:271px;top:656px" width="17" height="16" viewBox="0 0 17 16"><path d="M0 0H15V7H0Z" fill="#6cb52d"/><path d="M0 0H15V3H0Z" fill="#8ccc3a" opacity=".45"/><path d="M8.200 3.800V14.300L10.700 12L12.500 15.900L14.400 15L12.600 11.200L15.700 10.900Z" fill="#5a5a5a" stroke="#eef3e6" stroke-width=".7" paint-order="stroke"/></svg><div class="ev" style="left:294px;top:655px">页面载入时</div>
<div class="abs" style="left:275px;top:679px;border:4.5px solid transparent;border-top:7px solid #868686;border-bottom:0"></div><svg class="abs" style="left:289px;top:675px" width="15" height="16" viewBox="0 0 15 16"><rect x="2.5" y="0" width="9" height="5" fill="#6cb52d"/><path d="M7 5V8M2.5 11V8H11.5V11" fill="none" stroke="#666" stroke-width="1.3"/><rect x="0" y="10.500" width="5.5" height="5.5" fill="#1a96d4"/><rect x="8.800" y="10.500" width="5.5" height="5.5" fill="#1a96d4"/></svg><div class="ev" style="left:312px;top:675px">用例 1</div>
<svg class="abs" style="left:308px;top:694px" width="13" height="16" viewBox="0 0 13 16"><path d="M5 0H12L8 6H12.5L2 16L5 8.5H.5Z" fill="#5f5f5f"/></svg><div class="ev" style="left:330px;top:694px">等待<span class="g">2000毫秒</span></div>
<svg class="abs" style="left:308px;top:713px" width="13" height="16" viewBox="0 0 13 16"><path d="M5 0H12L8 6H12.5L2 16L5 8.5H.5Z" fill="#5f5f5f"/></svg><div class="ev" style="left:330px;top:713px">设置 <span class="g">面板11 到 Next 向左滑动 out 500ms 向左滑动 in 500ms 自动循环 循环间隔 2000 毫秒</span></div>
<svg class="abs" style="left:271px;top:732px" width="17" height="16" viewBox="0 0 17 16"><path d="M0 0H15V7H0Z" fill="#6cb52d"/><path d="M0 0H15V3H0Z" fill="#8ccc3a" opacity=".45"/><path d="M8.200 3.800V14.300L10.700 12L12.500 15.900L14.400 15L12.600 11.200L15.700 10.900Z" fill="#5a5a5a" stroke="#eef3e6" stroke-width=".7" paint-order="stroke"/></svg><div class="ev" style="left:294px;top:731px">窗口改变大小时</div>
<svg class="abs" style="left:271px;top:751px" width="17" height="16" viewBox="0 0 17 16"><path d="M0 0H15V7H0Z" fill="#6cb52d"/><path d="M0 0H15V3H0Z" fill="#8ccc3a" opacity=".45"/><path d="M8.200 3.800V14.300L10.700 12L12.500 15.900L14.400 15L12.600 11.200L15.700 10.900Z" fill="#5a5a5a" stroke="#eef3e6" stroke-width=".7" paint-order="stroke"/></svg><div class="ev" style="left:294px;top:750px">窗口滚动时</div>
<div class="lnk" style="left:261px;top:777px">更多事件</div>
<div class="red" style="left:270px;top:668px;width:551px;height:79px"></div>

<!-- ================= RIGHT COLUMN ================= -->
<div class="abs" style="left:956px;top:95px;width:484px;height:714px;background:#f3f3f3;border-left:1px solid #b9b9b9"></div>
<div class="ph" style="left:957px;top:95px;width:483px;border-top:0;height:17px;line-height:16px">部件交互和注释</div>

  <div class="abs" style="left:1397px;top:96px;font-size:10.5px;line-height:14px;font-weight:bold;color:#777">?</div>
  <svg class="abs" style="left:1412px;top:98px" width="9" height="9" viewBox="0 0 9 9"><path d="M2.5 .8H8.2V6.5L6.2 4.5L2.2 8.5L.7 7L4.7 3Z" fill="#777"/></svg>
  <svg class="abs" style="left:1427px;top:98px" width="9" height="9" viewBox="0 0 9 9"><path d="M1.3 1.6L7.300 7.600M7.300 1.600L1.300 7.600" stroke="#747474" stroke-width="2.1"/></svg>
<div class="abs" style="left:962px;top:116px;font-size:11px;line-height:14px;color:#111;font-weight:500;white-space:nowrap">动态面板<span style="margin-left:9px">名称</span></div>
<div class="abs" style="left:962px;top:132px;width:473px;height:22px;background:#fff;border:1px solid #b9b9b9;font-size:12.5px;line-height:20px;padding-left:3px;letter-spacing:.2px;color:#111">面板11</div>
<div class="abs" style="left:957px;top:169px;width:483px;height:1px;background:#c9c9c9"></div>
<div class="ptab sel" style="left:1151px;top:160px;width:48px;z-index:2;padding-left:4px">交互 <span style="position:relative;top:-4px;left:2px;font-size:11px;font-weight:bold">*</span></div>
<div class="ptab" style="left:1198px;top:160px;width:47px">注释</div>
<div class="lnk" style="left:967px;top:183px">新增用例...</div><div class="lnk off" style="left:1028px;top:183px">编辑用例...</div><div class="lnk off" style="left:1089px;top:183px">删除用例</div>
<svg class="abs" style="left:977px;top:203px" width="17" height="16" viewBox="0 0 17 16"><path d="M0 0H15V7H0Z" fill="#6cb52d"/><path d="M0 0H15V3H0Z" fill="#8ccc3a" opacity=".45"/><path d="M8.200 3.800V14.300L10.700 12L12.500 15.900L14.400 15L12.600 11.200L15.700 10.900Z" fill="#5a5a5a" stroke="#eef3e6" stroke-width=".7" paint-order="stroke"/></svg><div class="ev" style="left:1000px;top:202px">鼠标单击时</div>
<div class="abs" style="left:963px;top:225px;border:4.5px solid transparent;border-top:7px solid #868686;border-bottom:0"></div><svg class="abs" style="left:977px;top:222px" width="17" height="16" viewBox="0 0 17 16"><path d="M0 0H15V7H0Z" fill="#6cb52d"/><path d="M0 0H15V3H0Z" fill="#8ccc3a" opacity=".45"/><path d="M8.200 3.800V14.300L10.700 12L12.500 15.900L14.400 15L12.600 11.200L15.700 10.900Z" fill="#5a5a5a" stroke="#eef3e6" stroke-width=".7" paint-order="stroke"/></svg><div class="ev" style="left:1000px;top:221px">鼠标移入时</div>

<div class="abs" style="left:981px;top:244px;border:4.5px solid transparent;border-top:7px solid #868686;border-bottom:0"></div><svg class="abs" style="left:996px;top:240px" width="15" height="16" viewBox="0 0 15 16"><rect x="2.5" y="0" width="9" height="5" fill="#6cb52d"/><path d="M7 5V8M2.5 11V8H11.5V11" fill="none" stroke="#666" stroke-width="1.3"/><rect x="0" y="10.500" width="5.5" height="5.5" fill="#1a96d4"/><rect x="8.800" y="10.500" width="5.5" height="5.5" fill="#1a96d4"/></svg><div class="ev" style="left:1019px;top:240px">用例 1</div>
<svg class="abs" style="left:1014px;top:259px" width="13" height="16" viewBox="0 0 13 16"><path d="M5 0H12L8 6H12.5L2 16L5 8.5H.5Z" fill="#5f5f5f"/></svg><div class="ev" style="left:1037px;top:259px">设置 <span class="g">面板11 到 停止循环</span></div>
<div class="abs" style="left:963px;top:282px;border:4.5px solid transparent;border-top:7px solid #868686;border-bottom:0"></div><svg class="abs" style="left:977px;top:279px" width="17" height="16" viewBox="0 0 17 16"><path d="M0 0H15V7H0Z" fill="#6cb52d"/><path d="M0 0H15V3H0Z" fill="#8ccc3a" opacity=".45"/><path d="M8.200 3.800V14.300L10.700 12L12.500 15.900L14.400 15L12.600 11.200L15.700 10.900Z" fill="#5a5a5a" stroke="#eef3e6" stroke-width=".7" paint-order="stroke"/></svg><div class="ev" style="left:1000px;top:278px">鼠标移出时</div>

<div class="abs" style="left:981px;top:301px;border:4.5px solid transparent;border-top:7px solid #868686;border-bottom:0"></div><svg class="abs" style="left:996px;top:297px" width="15" height="16" viewBox="0 0 15 16"><rect x="2.5" y="0" width="9" height="5" fill="#6cb52d"/><path d="M7 5V8M2.5 11V8H11.5V11" fill="none" stroke="#666" stroke-width="1.3"/><rect x="0" y="10.500" width="5.5" height="5.5" fill="#1a96d4"/><rect x="8.800" y="10.500" width="5.5" height="5.5" fill="#1a96d4"/></svg><div class="ev" style="left:1019px;top:297px">用例 1</div>
<svg class="abs" style="left:1014px;top:316px" width="13" height="16" viewBox="0 0 13 16"><path d="M5 0H12L8 6H12.5L2 16L5 8.5H.5Z" fill="#5f5f5f"/></svg><div class="ev" style="left:1037px;top:316px">等待<span class="g">1000毫秒</span></div>
<svg class="abs" style="left:1014px;top:335px" width="13" height="16" viewBox="0 0 13 16"><path d="M5 0H12L8 6H12.5L2 16L5 8.5H.5Z" fill="#5f5f5f"/></svg><div class="ev" style="left:1037px;top:335px;width:400px;overflow:hidden">设置 <span class="g">面板11 到 Next 向左滑动 out 500ms 向左滑动 in 500ms 自动循环 循环间隔 2000 毫秒</span></div>
<svg class="abs" style="left:977px;top:355px" width="17" height="16" viewBox="0 0 17 16"><path d="M0 0H15V7H0Z" fill="#6cb52d"/><path d="M0 0H15V3H0Z" fill="#8ccc3a" opacity=".45"/><path d="M8.200 3.800V14.300L10.700 12L12.500 15.900L14.400 15L12.600 11.200L15.700 10.900Z" fill="#5a5a5a" stroke="#eef3e6" stroke-width=".7" paint-order="stroke"/></svg><div class="ev" style="left:1000px;top:354px">动态面板状态改变时</div>
<svg class="abs" style="left:977px;top:374px" width="17" height="16" viewBox="0 0 17 16"><path d="M0 0H15V7H0Z" fill="#6cb52d"/><path d="M0 0H15V3H0Z" fill="#8ccc3a" opacity=".45"/><path d="M8.200 3.800V14.300L10.700 12L12.500 15.900L14.400 15L12.600 11.200L15.700 10.900Z" fill="#5a5a5a" stroke="#eef3e6" stroke-width=".7" paint-order="stroke"/></svg><div class="ev" style="left:1000px;top:373px">开始拖动动态面板时</div>
<svg class="abs" style="left:977px;top:393px" width="17" height="16" viewBox="0 0 17 16"><path d="M0 0H15V7H0Z" fill="#6cb52d"/><path d="M0 0H15V3H0Z" fill="#8ccc3a" opacity=".45"/><path d="M8.200 3.800V14.300L10.700 12L12.500 15.900L14.400 15L12.600 11.200L15.700 10.900Z" fill="#5a5a5a" stroke="#eef3e6" stroke-width=".7" paint-order="stroke"/></svg><div class="ev" style="left:1000px;top:392px">拖动动态面板时</div>
<svg class="abs" style="left:977px;top:412px" width="17" height="16" viewBox="0 0 17 16"><path d="M0 0H15V7H0Z" fill="#6cb52d"/><path d="M0 0H15V3H0Z" fill="#8ccc3a" opacity=".45"/><path d="M8.200 3.800V14.300L10.700 12L12.500 15.900L14.400 15L12.600 11.200L15.700 10.900Z" fill="#5a5a5a" stroke="#eef3e6" stroke-width=".7" paint-order="stroke"/></svg><div class="ev" style="left:1000px;top:411px">结束拖放动态面板时</div>
<svg class="abs" style="left:977px;top:431px" width="17" height="16" viewBox="0 0 17 16"><path d="M0 0H15V7H0Z" fill="#6cb52d"/><path d="M0 0H15V3H0Z" fill="#8ccc3a" opacity=".45"/><path d="M8.200 3.800V14.300L10.700 12L12.500 15.900L14.400 15L12.600 11.200L15.700 10.900Z" fill="#5a5a5a" stroke="#eef3e6" stroke-width=".7" paint-order="stroke"/></svg><div class="ev" style="left:1000px;top:430px">向左滑动时</div>
<svg class="abs" style="left:977px;top:450px" width="17" height="16" viewBox="0 0 17 16"><path d="M0 0H15V7H0Z" fill="#6cb52d"/><path d="M0 0H15V3H0Z" fill="#8ccc3a" opacity=".45"/><path d="M8.200 3.800V14.300L10.700 12L12.500 15.900L14.400 15L12.600 11.200L15.700 10.900Z" fill="#5a5a5a" stroke="#eef3e6" stroke-width=".7" paint-order="stroke"/></svg><div class="ev" style="left:1000px;top:449px">向右滑动时</div>
<svg class="abs" style="left:977px;top:469px" width="17" height="16" viewBox="0 0 17 16"><path d="M0 0H15V7H0Z" fill="#6cb52d"/><path d="M0 0H15V3H0Z" fill="#8ccc3a" opacity=".45"/><path d="M8.200 3.800V14.300L10.700 12L12.500 15.900L14.400 15L12.600 11.200L15.700 10.900Z" fill="#5a5a5a" stroke="#eef3e6" stroke-width=".7" paint-order="stroke"/></svg><div class="ev" style="left:1000px;top:468px">载入时</div>

<div class="lnk" style="left:967px;top:495px">更多事件</div>
<div class="red" style="left:966px;top:218px;width:232px;height:60px;background:transparent"></div>
<div class="red" style="left:964px;top:290px;width:469px;height:72px"></div>
<!-- bottom scrollbar + collapsed panels -->
<div class="abs" style="left:957px;top:760px;width:483px;height:15px;background:#fbfbfb;border-top:1px solid #e9e9e9"></div>
<div class="abs" style="left:960px;top:764px;width:424px;height:8px;border-radius:4px;background:#c1c1c1"></div>
<div class="ph" style="left:957px;top:775px;width:483px;height:16px;line-height:16px;border-top:0">部件属性和样式</div>
  <div class="abs" style="left:1397px;top:774px;font-size:10.5px;line-height:14px;font-weight:bold;color:#777">?</div>
  <svg class="abs" style="left:1412px;top:778px" width="9" height="9" viewBox="0 0 9 9"><path d="M2.5 .8H8.2V6.5L6.2 4.5L2.2 8.5L.7 7L4.7 3Z" fill="#777"/></svg>
  <svg class="abs" style="left:1427px;top:778px" width="9" height="9" viewBox="0 0 9 9"><path d="M1.3 1.6L7.300 7.600M7.300 1.600L1.300 7.600" stroke="#747474" stroke-width="2.1"/></svg>
<div class="abs" style="left:957px;top:791px;width:483px;height:1px;background:#b6b6b6"></div>
<div class="ph" style="left:957px;top:792px;width:483px;height:17px;line-height:16px;border-top:0">部件管理</div>
  <div class="abs" style="left:1397px;top:791px;font-size:10.5px;line-height:14px;font-weight:bold;color:#777">?</div>
  <svg class="abs" style="left:1412px;top:795px" width="9" height="9" viewBox="0 0 9 9"><path d="M2.5 .8H8.2V6.5L6.2 4.5L2.2 8.5L.7 7L4.7 3Z" fill="#777"/></svg>
  <svg class="abs" style="left:1427px;top:795px" width="9" height="9" viewBox="0 0 9 9"><path d="M1.3 1.6L7.300 7.600M7.300 1.600L1.300 7.600" stroke="#747474" stroke-width="2.1"/></svg>

</div>
</body>
</html>
